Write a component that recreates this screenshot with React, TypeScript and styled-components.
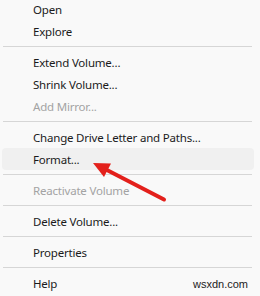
import React from "react";
import styled, { createGlobalStyle } from "styled-components";

const Global = createGlobalStyle`
  html, body { margin: 0; padding: 0; background: #f9f9f9; overflow: hidden; }
  #root { width: 260px; height: 296px; }
`;

const Page = styled.div`
  position: relative;
  width: 260px;
  height: 296px;
  overflow: hidden;
  background: #f9f9f9;
  font-family: "Segoe UI", "Noto Sans", sans-serif;
`;

const Menu = styled.ul`
  list-style: none;
  margin: -2px 0 0 0;
  padding: 0 6px 0 2px;
  display: flex;
  flex-direction: column;
`;

const Item = styled.li<{ $disabled?: boolean; $active?: boolean }>`
  height: 22px;
  display: flex;
  align-items: center;
  padding-left: 31px;
  border-radius: 4px;
  font-size: 11.5px;
  letter-spacing: -0.2px;
  color: ${(p) => (p.$disabled ? "#a3a3a3" : "#1b1b1b")};
  background: ${(p) => (p.$active ? "#f0f0f0" : "transparent")};
  white-space: nowrap;
`;

const Separator = styled.li`
  height: 9px;
  display: flex;
  align-items: flex-start;
  padding: 4px 2px 0 1px;
  box-sizing: border-box;
  &::after {
    content: "";
    flex: 1;
    height: 1px;
    background: #d6d6d6;
  }
`;

const Arrow = styled.svg`
  position: absolute;
  left: 0;
  top: 0;
  pointer-events: none;
`;

const Watermark = styled.div`
  position: absolute;
  right: 12px;
  bottom: 6px;
  font-family: "Liberation Sans", Arial, sans-serif;
  font-size: 11px;
  color: #222;
`;

type Entry = { label?: string; disabled?: boolean; active?: boolean; sep?: boolean };

const entries: Entry[] = [
  { label: "Open" },
  { label: "Explore" },
  { sep: true },
  { label: "Extend Volume..." },
  { label: "Shrink Volume..." },
  { label: "Add Mirror...", disabled: true },
  { sep: true },
  { label: "Change Drive Letter and Paths..." },
  { label: "Format...", active: true },
  { sep: true },
  { label: "Reactivate Volume", disabled: true },
  { sep: true },
  { label: "Delete Volume..." },
  { sep: true },
  { label: "Properties" },
  { sep: true },
  { label: "Help" },
];

export default function App() {
  return (
    <Page>
      <Global />
      <Menu>
        {entries.map((e, i) =>
          e.sep ? (
            <Separator key={i} />
          ) : (
            <Item key={i} $disabled={e.disabled} $active={e.active}>
              {e.label}
            </Item>
          )
        )}
      </Menu>
      <Arrow width="260" height="296" viewBox="0 0 260 296">
        <line x1="164" y1="199.5" x2="104" y2="168.5" stroke="#e3201b" strokeWidth="4" strokeLinecap="round" />
        <polygon points="93,163 111,163.5 104,177" fill="#e3201b" />
      </Arrow>
      <Watermark>wsxdn.com</Watermark>
    </Page>
  );
}
